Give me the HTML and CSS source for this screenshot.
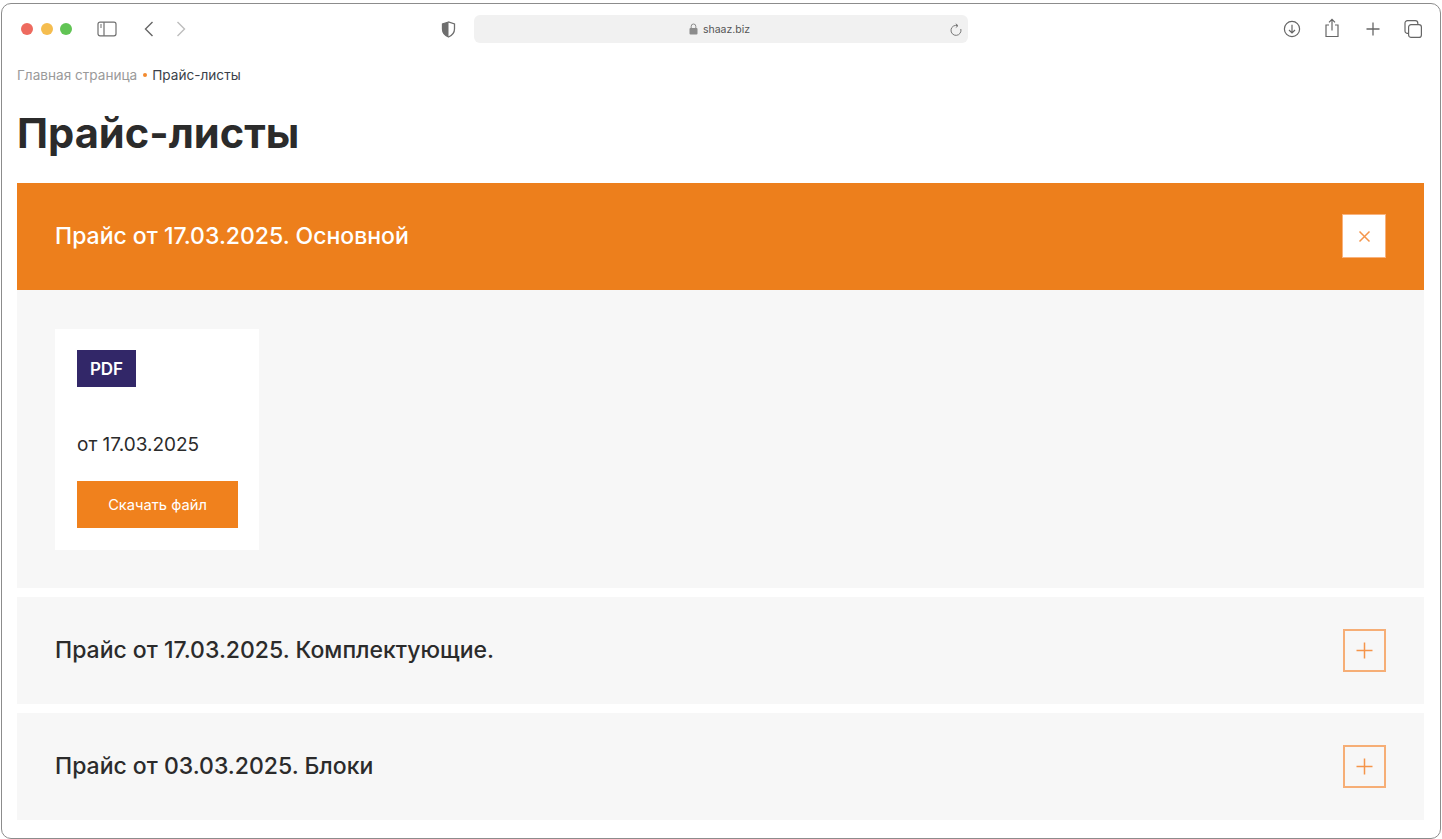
FILE: index.html
```html
<!DOCTYPE html>
<html lang="ru">
<head>
<meta charset="utf-8">
<title>Прайс-листы</title>
<link rel="stylesheet" href="styles.css">
</head>
<body>
<div class="window">
  <header class="toolbar">
    <div class="traffic">
      <span class="dot red"></span><span class="dot yellow"></span><span class="dot green"></span>
    </div>
    <svg class="ic sidebar" width="20" height="16" viewBox="0 0 20 16" fill="none" stroke="#6e6e6e" stroke-width="1.2"><rect x="1" y="1.2" width="18" height="13.6" rx="2"/><path d="M7 1.2v13.6"/><path d="M3 4h2M3 6h2" stroke-width="1"/></svg>
    <svg class="ic back" width="12" height="18" viewBox="0 0 12 18" fill="none" stroke="#666" stroke-width="1.4"><path d="M9.5 2 2.5 9l7 7"/></svg>
    <svg class="ic forward" width="12" height="18" viewBox="0 0 12 18" fill="none" stroke="#bdbdbd" stroke-width="1.4"><path d="M2.5 2l7 7-7 7"/></svg>
    <svg class="ic shield" width="15" height="17" viewBox="0 0 15 17"><path d="M7.5 1 1.5 3v5c0 4 2.6 6.5 6 8 3.4-1.5 6-4 6-8V3z" fill="none" stroke="#6e6e6e" stroke-width="1.3"/><path d="M7.5 1 1.5 3v5c0 4 2.6 6.5 6 8z" fill="#6e6e6e"/></svg>
    <div class="address">
      <span class="addr-center">
        <svg width="9" height="12" viewBox="0 0 9 12"><rect x="0.5" y="5" width="8" height="6.5" rx="1" fill="#8c8c8c"/><path d="M2.2 5.5V3.3a2.3 2.3 0 0 1 4.6 0v2.2" fill="none" stroke="#8c8c8c" stroke-width="1"/></svg>
        <span class="url">shaaz.biz</span>
      </span>
      <svg class="reload" width="13" height="14" viewBox="0 0 13 14" fill="none" stroke="#777" stroke-width="1"><path d="M10.8 6a5 5 0 1 1-3.3-3.4"/><path d="M5.8.8l2.2 1.9-2.2 1.8"/></svg>
    </div>
    <div class="actions">
      <span class="action"><svg width="18" height="18" viewBox="0 0 18 18" fill="none" stroke="#666" stroke-width="1.2"><circle cx="9" cy="9" r="7.6"/><path d="M9 4.8v8M6 10l3 3 3-3"/></svg></span>
      <span class="action share"><svg width="16" height="20" viewBox="0 0 16 20" fill="none" stroke="#666" stroke-width="1.2"><path d="M5 7H2v11.5h12V7h-3"/><path d="M8 12.5V1.5M5 4.3 8 1.3l3 3"/></svg></span>
      <span class="action"><svg width="14" height="14" viewBox="0 0 14 14" fill="none" stroke="#666" stroke-width="1.3"><path d="M7 .5v13M.5 7h13"/></svg></span>
      <span class="action"><svg width="18" height="18" viewBox="0 0 18 18" fill="none" stroke="#666" stroke-width="1.2"><rect x="4.6" y="4.6" width="12.8" height="12.8" rx="2.5"/><path d="M4.6 13.4H3.5A2.5 2.5 0 0 1 1 10.9V3.1A2.5 2.5 0 0 1 3.5.6h7.8a2.5 2.5 0 0 1 2.5 2.5v1.5"/></svg></span>
    </div>
  </header>

  <main class="page">
    <nav class="crumbs">
      <span class="crumb-link">Главная страница</span><span class="crumb-dot"></span><span class="crumb-current">Прайс-листы</span>
    </nav>
    <h1 class="title">Прайс-листы</h1>

    <section class="acc open">
      <div class="acc-head">
        <h2 class="acc-title">Прайс от 17.03.2025. Основной</h2>
        <span class="acc-btn white">
          <svg width="13" height="13" viewBox="0 0 13 13" fill="none" stroke="#f5954a" stroke-width="1.5"><path d="M1.5 1.5l10 10M11.5 1.5l-10 10"/></svg>
        </span>
      </div>
      <div class="acc-body">
        <article class="file-card">
          <span class="badge">PDF</span>
          <p class="file-date">от 17.03.2025</p>
          <a class="download">Скачать файл</a>
        </article>
      </div>
    </section>

    <section class="acc">
      <div class="acc-head">
        <h2 class="acc-title">Прайс от 17.03.2025. Комплектующие.</h2>
        <span class="acc-btn">
          <svg width="17" height="17" viewBox="0 0 17 17" fill="none" stroke="#f5954a" stroke-width="1.5"><path d="M8.5 .5v16M.5 8.5h16"/></svg>
        </span>
      </div>
    </section>

    <section class="acc">
      <div class="acc-head">
        <h2 class="acc-title">Прайс от 03.03.2025. Блоки</h2>
        <span class="acc-btn">
          <svg width="17" height="17" viewBox="0 0 17 17" fill="none" stroke="#f5954a" stroke-width="1.5"><path d="M8.5 .5v16M.5 8.5h16"/></svg>
        </span>
      </div>
    </section>
  </main>
</div>
</body>
</html>
```

FILE: styles.css
```css
* { box-sizing: border-box; }
html, body { margin: 0; padding: 0; background: #fff; }
body { font-family: "Inter", "Noto Sans", sans-serif; color: #2b2b2b; height: 839px; overflow: hidden; }

.window {
  margin: 3px 1px 0 1px;
  height: 836px;
  border: 1px solid #8c8c8c;
  border-radius: 10px;
  background: #fff;
  overflow: hidden;
}

.toolbar { height: 50px; display: flex; align-items: center; position: relative; padding-left: 19px; }
.traffic { display: flex; gap: 7.5px; }
.dot { width: 12px; height: 12px; border-radius: 50%; }
.red { background: #ee6a5f; }
.yellow { background: #f5bd4f; }
.green { background: #61c454; }
.ic { flex: none; }
.sidebar { margin-left: 25px; }
.back { margin-left: 26px; }
.forward { margin-left: 20px; }
.shield { margin-left: 254px; }
.address {
  margin-left: 18px; width: 494px; height: 28px; border-radius: 6px; background: #f1f1f1;
  display: flex; align-items: center; justify-content: center; position: relative;
}
.addr-center { display: flex; align-items: center; gap: 5px; margin-left: -3px; }
.url { font-size: 10.5px; color: #555; }
.reload { position: absolute; right: 5px; top: 8px; }
.actions { margin-left: auto; display: flex; align-items: center; padding-right: 6.5px; }
.action { width: 40.5px; display: flex; justify-content: center; align-items: center; }
.share { margin-bottom: 3px; }

.page { padding: 0 16px 0 15px; }
.crumbs { display: flex; align-items: center; font-size: 13.6px; line-height: 16px; padding-top: 13px; }
.crumb-link { color: #9a9a9a; }
.crumb-dot { width: 4px; height: 4px; margin: 0 5px 0 6px; background: #f28a2e; border-radius: 50%; }
.crumb-current { color: #3b3f4a; }
.title { margin: 22px 0 0; font-size: 41.6px; line-height: 56px; font-weight: 700; color: #2b2b2b; }

.acc { margin-top: 9px; background: #f7f7f7; }
.title + .acc { margin-top: 22px; }
.acc-head { height: 107px; display: flex; align-items: center; justify-content: space-between; padding: 0 38px; }
.acc-title { margin: 0 0 2px; font-size: 23px; line-height: 30px; font-weight: 500; color: #2b2b2b; }
.open .acc-head { background: #ed7f1c; }
.open .acc-title { color: #fff; }
.acc-btn { width: 43px; height: 43px; display: flex; align-items: center; justify-content: center; border: 2px solid #f6ae76; }
.acc-btn.white { width: 44px; height: 44px; margin-bottom: 1px; background: #fff; border: 1px solid #f9b27c; }

.acc-body { padding: 39px 38px 38px; }
.file-card { width: 204px; height: 221px; background: #fff; padding: 21px 21px 21px 22px; display: flex; flex-direction: column; align-items: flex-start; }
.badge { width: 59px; height: 37px; background: #322768; color: #fff; font-size: 17px; font-weight: 600; display: flex; align-items: center; justify-content: center; }
.file-date { margin: 46px 0 0; font-size: 19px; line-height: 24px; color: #2b2b2b; }
.download { margin-top: 24px; width: 161px; height: 47px; background: #f0811d; color: #fff; font-size: 14.7px; display: flex; align-items: center; justify-content: center; }
```
